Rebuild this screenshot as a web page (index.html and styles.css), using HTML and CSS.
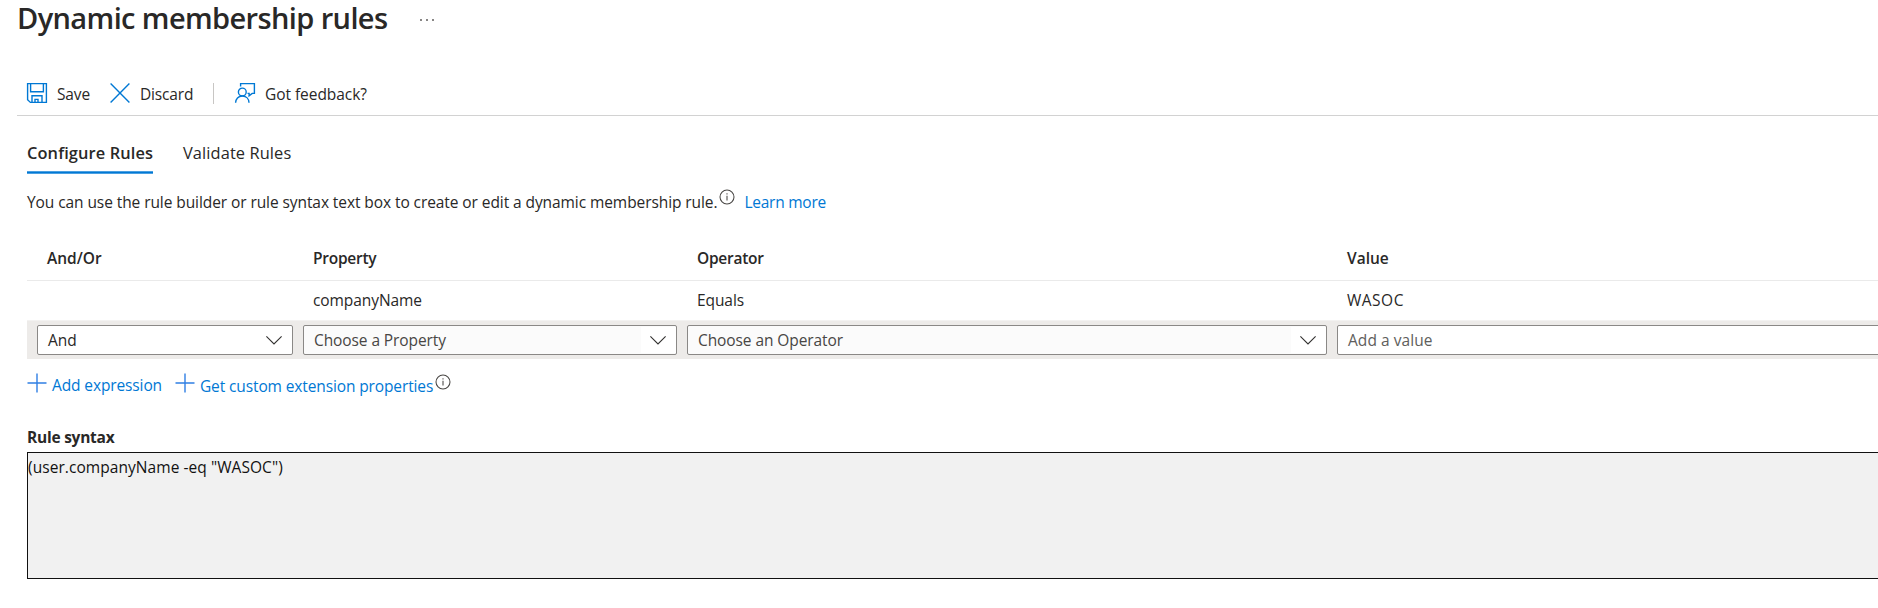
FILE: index.html
```html
<!DOCTYPE html>
<html lang="en">
<head>
<meta charset="utf-8">
<title>Dynamic membership rules</title>
<link rel="stylesheet" href="styles.css">
</head>
<body>
<header class="page-header">
  <h1 class="page-title">Dynamic membership rules</h1>
  <span class="more"><i class="dot"></i><i class="dot"></i><i class="dot"></i></span>
</header>
<div class="toolbar">
  <div class="command save">
    <svg class="icon" viewBox="0 0 20 20"><path d="M.6.6h18.800v18.800H3.400L.6 16.800zM3.600.6v8.200h12.800V.6M5 19.400v-6.600h10v6.600M8 19.400v-3h3v3"/></svg>
    <span class="caption">Save</span>
  </div>
  <div class="command discard">
    <svg class="icon" viewBox="0 0 20 20"><path d="M.6.6l18.800 18.800M19.400.6L.6 19.400"/></svg>
    <span class="caption">Discard</span>
  </div>
  <div class="separator"></div>
  <div class="command feedback">
    <svg class="icon" viewBox="0 0 20 20"><path d="M5.600 3.600v-3h13.800v9.800h-2.200l-3.100 2.500v-2.500h-1.600"/><circle cx="7.300" cy="9" r="3.900"/><path d="M.6 19.800c0-4 2.800-6.800 6.700-6.800s6.700 2.800 6.700 6.800"/></svg>
    <span class="caption">Got feedback?</span>
  </div>
</div>
<main class="content">
  <nav class="tabs">
    <a class="tab active">Configure Rules</a>
    <a class="tab">Validate Rules</a>
  </nav>
  <p class="intro">You can use the rule builder or rule syntax text box to create or edit a dynamic membership rule.<svg class="info" viewBox="0 0 16 16"><circle cx="8" cy="8" r="7"/><path d="M8 6.800v4.700M8 4.300v1.200"/></svg><a class="link learn">Learn more</a></p>
  <section class="rules">
    <div class="row head">
      <div class="cell">And/Or</div>
      <div class="cell tight">Property</div>
      <div class="cell tight">Operator</div>
      <div class="cell">Value</div>
    </div>
    <div class="row rule">
      <div class="cell"></div>
      <div class="cell">companyName</div>
      <div class="cell">Equals</div>
      <div class="cell wide">WASOC</div>
    </div>
    <div class="row edit">
      <div class="field">And<span class="drop"><svg class="chevron" viewBox="0 0 16 9"><path d="M.4.4L8 8 15.600.4"/></svg></span></div>
      <div class="field combo">Choose a Property<span class="drop"><svg class="chevron" viewBox="0 0 16 9"><path d="M.4.4L8 8 15.600.4"/></svg></span></div>
      <div class="field combo">Choose an Operator<span class="drop"><svg class="chevron" viewBox="0 0 16 9"><path d="M.4.4L8 8 15.600.4"/></svg></span></div>
      <div class="field value">Add a value</div>
    </div>
  </section>
  <div class="actions">
    <a class="link action"><svg class="plus" viewBox="0 0 20 20"><path d="M10 .5v19M.5 10h19"/></svg><span class="action-text">Add expression</span></a>
    <a class="link action custom"><svg class="plus" viewBox="0 0 20 20"><path d="M10 .5v19M.5 10h19"/></svg><span class="action-text">Get custom extension properties</span></a>
    <svg class="info" viewBox="0 0 16 16"><circle cx="8" cy="8" r="7"/><path d="M8 6.800v4.700M8 4.300v1.200"/></svg>
  </div>
  <h2 class="label">Rule syntax</h2>
  <div class="syntax">(user.companyName -eq "WASOC")</div>
</main>
</body>
</html>
```
FILE: styles.css
```css
* { box-sizing: border-box; }
body { margin: 0; height: 608px; overflow: hidden; background: #fff; color: #292827; font: 15.5px/20px "Open Sans", "Noto Sans", sans-serif; }
svg { display: block; flex: none; fill: none; overflow: visible; }

.page-header { display: flex; height: 36px; padding-left: 17px; }
.page-title { width: 403px; margin: 0; font-size: 29px; line-height: 36px; font-weight: 600; letter-spacing: -0.61px; white-space: nowrap; }
.more { display: flex; gap: 4px; padding-top: 19px; }
.dot { width: 2px; height: 2px; border-radius: 1px; background: #605e5c; }

.toolbar { display: flex; align-items: center; height: 45px; margin: 35px 0 0 17px; padding-left: 10px; border-bottom: 1px solid #d2d2d2; }
.command { display: flex; align-items: center; gap: 10px; white-space: nowrap; letter-spacing: -0.15px; }
.caption { padding-top: 2px; }
.save { width: 83px; }
.discard { width: 103px; }
.feedback { letter-spacing: -0.05px; }
.separator { width: 1px; height: 21px; margin-right: 21px; background: #c8c6c4; }
.icon { width: 20px; height: 20px; stroke: #0078d4; stroke-width: 1.4; }

.content { padding-left: 27px; }
.tabs { display: flex; gap: 30px; height: 58px; padding-top: 27px; font-size: 16.4px; }
.tab { height: 31px; white-space: nowrap; letter-spacing: 0.1px; }
.active { width: 126px; font-weight: 600; letter-spacing: 0.11px; background: linear-gradient(#6fb3e8, #0078d4 50%, #6fb3e8) bottom / 100% 3px no-repeat; }

.intro { display: flex; height: 20px; margin: 18px 0 0; white-space: nowrap; letter-spacing: -0.081px; }
.intro .info { margin: -3px 9px 0 2px; }
.info { width: 16px; height: 16px; stroke: #484644; stroke-width: 1.05; }
.link { color: #0078d4; }
.learn { letter-spacing: -0.25px; }

.rules { margin-top: 24px; }
.row { display: grid; grid-template-columns: 256px 374px 640px 1fr; column-gap: 10px; align-items: center; padding-left: 10px; }
.head { height: 45px; border-bottom: 1px solid #eaeaea; font-weight: 600; }
.rule { height: 40px; padding-bottom: 2px; border-bottom: 1px solid #f3f2f1; letter-spacing: -0.08px; }
.edit { height: 38px; background: #edebe9; }
.cell { padding-left: 10px; }
.tight { letter-spacing: -0.25px; }
.wide { letter-spacing: 0.5px; }
.field { display: flex; align-items: center; justify-content: space-between; height: 30px; padding-left: 10px; border: 1px solid #8a8886; border-radius: 2px; background: #fff; white-space: nowrap; }
.combo { background: #fbfbfb; color: #484644; letter-spacing: -0.09px; }
.value { margin-right: -10px; color: #605e5c; letter-spacing: 0.05px; }
.drop { display: flex; align-items: center; justify-content: center; width: 35px; height: 26px; padding-right: 1px; background: #fff; }
.chevron { width: 16px; height: 9px; stroke: #323130; stroke-width: 1.1; }

.actions { display: flex; height: 20px; margin-top: 15px; }
.action { display: flex; gap: 5px; white-space: nowrap; letter-spacing: -0.12px; }
.action-text { padding-top: 1px; }
.custom { margin-left: 13px; }
.custom .action-text { padding-top: 2px; }
.actions .info { margin-left: 2px; }
.plus { width: 20px; height: 20px; margin-top: -1px; stroke: #2f7fe4; stroke-width: 1.4; }

.label { margin: 33px 0 0; font-size: 15.5px; line-height: 20px; font-weight: 700; letter-spacing: -0.24px; }
.syntax { height: 127px; margin: 5px -2px 0 0; padding-top: 4px; border: 1px solid #111; background: #f1f1f1; color: #111; letter-spacing: 0.06px; }
```
